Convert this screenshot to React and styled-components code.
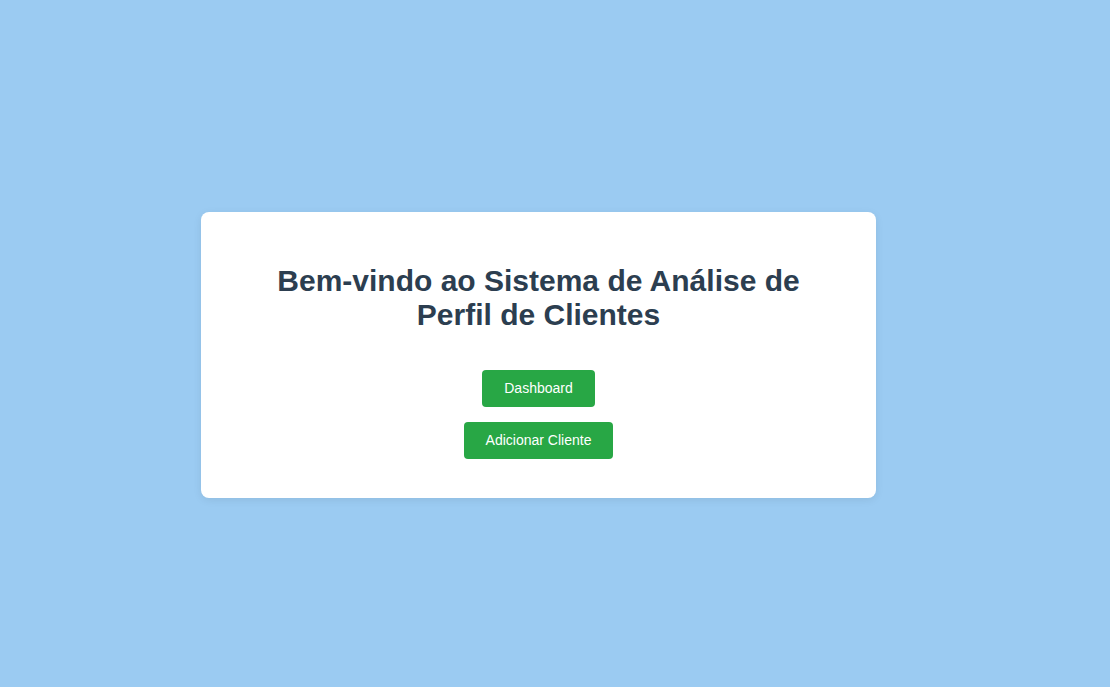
import React from "react";
import styled, { createGlobalStyle } from "styled-components";

const GlobalStyle = createGlobalStyle`
  html, body {
    margin: 0;
    padding: 0;
    background: #9bcbf2;
    font-family: "Liberation Sans", Arial, sans-serif;
  }
`;

const App = () => {
  return (
    <>
      <GlobalStyle />
      <Page>
        <Card>
          <Title>Bem-vindo ao Sistema de Análise de Perfil de Clientes</Title>
          <Actions>
            <Button>Dashboard</Button>
            <Button>Adicionar Cliente</Button>
          </Actions>
        </Card>
      </Page>
    </>
  );
};

export default App;

const Page = styled.div`
  display: flex;
  align-items: center;
  justify-content: center;
  min-height: 100vh;
  box-sizing: border-box;
  padding: 22px 33px 0 0;
`;

const Card = styled.div`
  box-sizing: border-box;
  width: 675px;
  padding: 52px 60px 39px;
  background: #ffffff;
  border-radius: 8px;
  box-shadow: 0 2px 8px rgba(0, 0, 0, 0.08);
  text-align: center;
`;

const Title = styled.h1`
  margin: 0 0 38px;
  font-size: 30px;
  line-height: 34px;
  font-weight: bold;
  color: #2c3e50;
`;

const Actions = styled.div`
  display: flex;
  flex-direction: column;
  align-items: center;
  gap: 15px;
`;

const Button = styled.button`
  padding: 10px 22px;
  border: none;
  border-radius: 4px;
  background: #28a745;
  color: #ffffff;
  font-family: "Liberation Sans", Arial, sans-serif;
  font-size: 14px;
  line-height: 17px;
  cursor: pointer;
`;
